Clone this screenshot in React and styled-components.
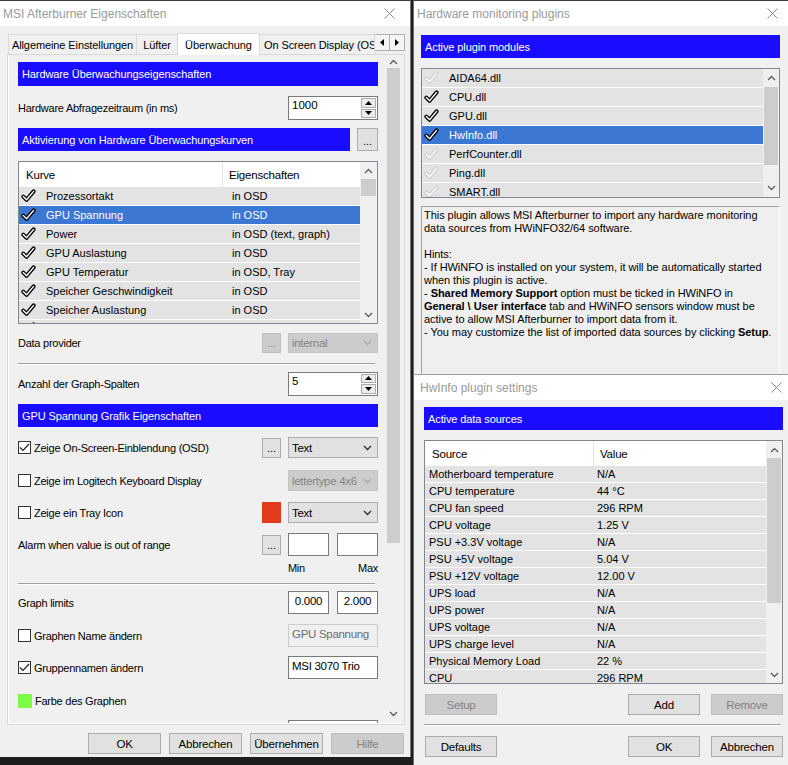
import React from 'react';
import styled, { createGlobalStyle } from 'styled-components';

const GlobalStyle = createGlobalStyle`
  html, body { margin: 0; padding: 0; background: #1d1d1d; }
  body { font-family: "Liberation Sans", Arial, sans-serif; font-size: 11px; color: #000; }
  * { box-sizing: border-box; }
`;

const Desktop = styled.div`
  width: 788px;
  height: 765px;
  display: flex;
  gap: 2px;
  overflow: hidden;
  background: #1d1d1d;
`;

const Window = styled.div`
  width: ${p => p.$w}px;
  height: ${p => p.$h}px;
  flex: none;
  background: #f0f0f0;
  display: flex;
  flex-direction: column;
  overflow: hidden;
  border-top: 1px solid ${p => p.$edge || '#3c3c3c'};
  border-left: ${p => (p.$left ? '1px solid #6e6e6e' : 'none')};
  border-right: ${p => (p.$right ? '1px solid #7a7a7a' : 'none')};
`;

const RightColumn = styled.div`
  width: 375px;
  flex: none;
  display: flex;
  flex-direction: column;
`;

const TitleBar = styled.div`
  height: 25px;
  flex: none;
  background: #fff;
  display: flex;
  align-items: center;
  justify-content: space-between;
  padding: 0 ${p => p.$r}px 0 ${p => p.$l}px;
  font-size: 12px;
  color: #9a9a9a;
  white-space: nowrap;
`;

const CloseX = () => (
  <svg width="11" height="11" viewBox="0 0 11 11">
    <path d="M0.5 0.5 L10.5 10.5 M10.5 0.5 L0.5 10.5" stroke="#8c8c8c" strokeWidth="1" />
  </svg>
);

const Chevron = ({ up, color = '#606060' }) => (
  <svg width="9" height="6" viewBox="0 0 9 6">
    <path d={up ? 'M1 5 L4.5 1.5 L8 5' : 'M1 1 L4.5 4.5 L8 1'} fill="none" stroke={color} strokeWidth="1.4" />
  </svg>
);

const Tri = ({ dir }) => {
  const d = {
    up: 'M0 4 L3.5 0 L7 4 Z',
    down: 'M0 0 L3.5 4 L7 0 Z',
    left: 'M4 0 L0 3.5 L4 7 Z',
    right: 'M0 0 L4 3.5 L0 7 Z',
  }[dir];
  const horiz = dir === 'left' || dir === 'right';
  return (
    <svg width={horiz ? 4 : 7} height={horiz ? 7 : 4} viewBox={horiz ? '0 0 4 7' : '0 0 7 4'}>
      <path d={d} fill="#000" />
    </svg>
  );
};

const ListCheck = ({ on }) => (
  <svg width="15" height="14" viewBox="0 0 15 14">
    <path d="M2.3 7.6 L5.6 10.8 L12.6 2.4" fill="none" stroke={on ? '#000' : '#d0d0d0'} strokeWidth="4" strokeLinecap="round" strokeLinejoin="round" />
    <path d="M2.3 7.6 L5.6 10.8 L12.6 2.4" fill="none" stroke="#fff" strokeWidth="1.4" strokeLinecap="round" strokeLinejoin="round" />
  </svg>
);

/* ---------- tabs ---------- */

const TabStrip = styled.div`
  height: 28px;
  flex: none;
  display: flex;
  align-items: flex-end;
  padding-left: 8px;
`;

const Tab = styled.div`
  width: ${p => p.$w}px;
  height: ${p => (p.$active ? 22 : 20)}px;
  flex: none;
  display: flex;
  align-items: center;
  justify-content: ${p => (p.$clip ? 'flex-start' : 'center')};
  padding-left: ${p => (p.$clip ? 4 : 0)}px;
  overflow: hidden;
  white-space: nowrap;
  font-size: 11px;
  letter-spacing: -0.1px;
  background: ${p => (p.$active ? '#fff' : '#f0f0f0')};
  border: 1px solid #d9d9d9;
  border-bottom: none;
  margin-right: -1px;
  margin-bottom: ${p => (p.$active ? -1 : 0)}px;
  position: relative;
  z-index: ${p => (p.$active ? 2 : 1)};
`;

const TabScroller = styled.div`
  display: flex;
  margin: 0 0 3px 1px;
`;

const TabArrow = styled.div`
  width: 16px;
  height: 17px;
  border: 1px solid #adadad;
  background: #f5f5f5;
  display: flex;
  align-items: center;
  justify-content: center;
  margin-left: -1px;
`;

const TabPanel = styled.div`
  width: 398px;
  height: 671px;
  flex: none;
  margin-left: 7px;
  border: 1px solid #d9d9d9;
  background: #fff;
  padding: 0 0 1px 1px;
  display: flex;
`;

const PanelInner = styled.div`
  flex: 1;
  background: #f0f0f0;
  display: flex;
  overflow: hidden;
`;

const ScrollContent = styled.div`
  width: 377px;
  flex: none;
  padding: 7px 8px 0 9px;
  display: flex;
  flex-direction: column;
  overflow: hidden;
`;

/* ---------- scrollbars ---------- */

const ScrollTrack = styled.div`
  width: ${p => p.$w}px;
  flex: none;
  display: flex;
  flex-direction: column;
  background: #f0f0f0;
  margin: ${p => p.$m || '0'};
`;

const ScrollArrow = styled.div`
  height: ${p => p.$h}px;
  flex: none;
  display: flex;
  align-items: center;
  justify-content: center;
`;

const Thumb = styled.div`
  height: ${p => p.$h}px;
  flex: none;
  margin: ${p => p.$top}px 1px 0;
  background: #cdcdcd;
`;

const Fill = styled.div`
  flex: 1;
`;

const ScrollBar = ({ w, arrow, top = 0, thumb, m }) => (
  <ScrollTrack $w={w} $m={m}>
    <ScrollArrow $h={arrow}><Chevron up /></ScrollArrow>
    <Thumb $top={top} $h={thumb} />
    <Fill />
    <ScrollArrow $h={arrow}><Chevron /></ScrollArrow>
  </ScrollTrack>
);

/* ---------- form parts ---------- */

const Header = styled.div`
  height: ${p => p.$h || 23}px;
  flex: ${p => (p.$grow ? 1 : 'none')};
  width: ${p => (p.$w ? `${p.$w}px` : 'auto')};
  background: #1a0dff;
  color: #fff;
  font-size: 11px;
  letter-spacing: -0.1px;
  display: flex;
  align-items: center;
  padding-left: 4px;
  white-space: nowrap;
  margin-top: ${p => p.$mt || 0}px;
`;

const Row = styled.div`
  height: ${p => p.$h || 22}px;
  flex: none;
  display: flex;
  align-items: center;
  gap: ${p => p.$gap ?? 7}px;
  margin-top: ${p => p.$mt || 0}px;
`;

const Label = styled.span`
  flex: 1;
  font-size: 11px;
  letter-spacing: -0.25px;
  white-space: nowrap;
  display: flex;
  align-items: center;
`;

const Box = styled.span`
  width: 13px;
  height: 13px;
  flex: none;
  border: 1px solid #333;
  background: #fff;
  margin-right: 3px;
  display: flex;
  align-items: center;
  justify-content: center;
`;

const Swatch = styled.span`
  width: ${p => p.$w}px;
  height: ${p => p.$h}px;
  flex: none;
  background: ${p => p.$c};
  margin-right: ${p => p.$mr || 0}px;
`;

const CheckBox = ({ on }) => (
  <Box>
    {on && (
      <svg width="11" height="9" viewBox="0 0 11 9">
        <path d="M1 4.5 L4 7.5 L10 1" fill="none" stroke="#222" strokeWidth="1.2" />
      </svg>
    )}
  </Box>
);

const Dots = styled.div`
  width: ${p => p.$w || 19}px;
  height: ${p => p.$h || 20}px;
  flex: none;
  border: 1px solid ${p => (p.$dis ? '#bfbfbf' : '#adadad')};
  background: ${p => (p.$dis ? '#cccccc' : '#e1e1e1')};
  color: ${p => (p.$dis ? '#8a8a8a' : '#000')};
  font-size: 11px;
  display: flex;
  align-items: flex-end;
  justify-content: center;
  padding-bottom: 3px;
  line-height: 1;
`;

const Select = styled.div`
  width: 90px;
  height: ${p => p.$h || 21}px;
  flex: none;
  border: 1px solid ${p => (p.$dis ? '#c4c4c4' : '#adadad')};
  background: ${p => (p.$dis ? '#cccccc' : '#e1e1e1')};
  color: ${p => (p.$dis ? '#838383' : '#000')};
  font-size: 11.5px;
  letter-spacing: -0.3px;
  display: flex;
  align-items: center;
  justify-content: space-between;
  padding: 0 5px 0 3px;
  white-space: nowrap;
`;

const Edit = styled.div`
  width: ${p => p.$w}px;
  height: 23px;
  flex: none;
  border: 1px solid ${p => (p.$dis ? '#cccccc' : '#7a7a7a')};
  background: ${p => (p.$dis ? '#f0f0f0' : '#fff')};
  color: ${p => (p.$dis ? '#6d6d6d' : '#000')};
  font-size: 11.5px;
  letter-spacing: -0.3px;
  padding: 3px 3px 0;
  text-align: ${p => (p.$center ? 'center' : 'left')};
  white-space: nowrap;
`;

const Spin = styled.div`
  width: 90px;
  height: 24px;
  flex: none;
  display: flex;
  border: 1px solid #7a7a7a;
  background: #fff;
`;

const SpinText = styled.div`
  flex: 1;
  font-size: 11.5px;
  padding: 2px 3px 0;
`;

const SpinButtons = styled.div`
  width: 17px;
  display: flex;
  flex-direction: column;
  gap: 1px;
  padding: 1px;
`;

const SpinButton = styled.div`
  flex: 1;
  border: 1px solid #adadad;
  background: #ececec;
  display: flex;
  align-items: center;
  justify-content: center;
`;

const SpinBox = ({ value }) => (
  <Spin>
    <SpinText>{value}</SpinText>
    <SpinButtons>
      <SpinButton><Tri dir="up" /></SpinButton>
      <SpinButton><Tri dir="down" /></SpinButton>
    </SpinButtons>
  </Spin>
);

const Separator = styled.div`
  height: 2px;
  flex: none;
  width: ${p => p.$w}px;
  border-top: 1px solid #a0a0a0;
  border-bottom: 1px solid #fff;
  margin-top: ${p => p.$mt || 0}px;
`;

const MinMax = styled.div`
  width: 90px;
  display: flex;
  justify-content: space-between;
  font-size: 11px;
  letter-spacing: -0.3px;
`;

const Button = styled.div`
  width: ${p => p.$w || 73}px;
  height: 21px;
  flex: none;
  border: 1px solid ${p => (p.$dis ? '#bfbfbf' : '#adadad')};
  background: ${p => (p.$dis ? '#cccccc' : '#e1e1e1')};
  color: ${p => (p.$dis ? '#838383' : '#000')};
  font-size: 11.5px;
  letter-spacing: -0.2px;
  display: flex;
  align-items: center;
  justify-content: center;
`;

const ButtonBar = styled.div`
  display: flex;
  gap: ${p => p.$gap || 8}px;
  justify-content: ${p => p.$justify || 'flex-end'};
  padding: 0 ${p => p.$pr || 0}px 0 ${p => p.$pl || 0}px;
  margin-top: ${p => p.$mt || 0}px;
  flex: none;
`;

const Spacer = styled.div`
  flex: 1;
`;

/* ---------- list views ---------- */

const ListBox = styled.div`
  width: ${p => (p.$w ? `${p.$w}px` : 'auto')};
  height: ${p => p.$h}px;
  flex: none;
  border: 1px solid #828790;
  background: #fff;
  display: flex;
  margin-top: ${p => p.$mt || 0}px;
  overflow: hidden;
`;

const ListMain = styled.div`
  flex: 1;
  display: flex;
  flex-direction: column;
  overflow: hidden;
`;

const ListHead = styled.div`
  height: 25px;
  flex: none;
  display: flex;
  background: #fff;
  font-size: 11.5px;
  letter-spacing: -0.2px;
`;

const HeadCell = styled.div`
  width: ${p => (p.$w ? `${p.$w}px` : 'auto')};
  flex: ${p => (p.$w ? 'none' : 1)};
  padding-left: ${p => p.$pl}px;
  display: flex;
  align-items: center;
  border-right: ${p => (p.$w ? '1px solid #e5e5e5' : 'none')};
`;

const ListRow = styled.div`
  height: ${p => p.$h}px;
  flex: none;
  display: flex;
  align-items: center;
  background: ${p => (p.$sel ? '#3b77d3' : '#e3e3e3')};
  color: ${p => (p.$sel ? '#fff' : '#000')};
  border-bottom: 1px solid #fff;
  font-size: 11px;
  white-space: nowrap;
`;

const Cell = styled.div`
  width: ${p => (p.$w ? `${p.$w}px` : 'auto')};
  flex: ${p => (p.$w ? 'none' : 1)};
  padding-left: ${p => p.$pl}px;
  display: flex;
  align-items: center;
  gap: ${p => p.$gap || 0}px;
  overflow: hidden;
`;

const DescBox = styled.div`
  width: 359px;
  flex: 1;
  margin-top: 8px;
  border: 1px solid #a0a0a0;
  border-right-color: #fff;
  border-bottom: none;
  background: #efefef;
  padding: 2px 2px;
  font-size: 11px;
  letter-spacing: -0.05px;
  line-height: 13px;
  white-space: nowrap;
  overflow: hidden;
`;

const WinBody = styled.div`
  flex: 1;
  display: flex;
  flex-direction: column;
  padding-left: ${p => p.$pl}px;
  overflow: hidden;
`;

/* ---------- data ---------- */

const curves = [
  ['Prozessortakt', 'in OSD'],
  ['GPU Spannung', 'in OSD', true],
  ['Power', 'in OSD (text, graph)'],
  ['GPU Auslastung', 'in OSD'],
  ['GPU Temperatur', 'in OSD, Tray'],
  ['Speicher Geschwindigkeit', 'in OSD'],
  ['Speicher Auslastung', 'in OSD'],
  ['', ''],
];

const plugins = [
  ['AIDA64.dll', false],
  ['CPU.dll', true],
  ['GPU.dll', true],
  ['HwInfo.dll', true, true],
  ['PerfCounter.dll', false],
  ['Ping.dll', false],
  ['SMART.dll', false],
];

const sources = [
  ['Motherboard temperature', 'N/A'],
  ['CPU temperature', '44 °C'],
  ['CPU fan speed', '296 RPM'],
  ['CPU voltage', '1.25 V'],
  ['PSU +3.3V voltage', 'N/A'],
  ['PSU +5V voltage', '5.04 V'],
  ['PSU +12V voltage', '12.00 V'],
  ['UPS load', 'N/A'],
  ['UPS power', 'N/A'],
  ['UPS voltage', 'N/A'],
  ['UPS charge level', 'N/A'],
  ['Physical Memory Load', '22 %'],
  ['CPU', '296 RPM'],
];

/* ---------- windows ---------- */

const PropertiesWindow = () => (
  <Window $w={411} $h={757} $right>
    <TitleBar $l={3} $r={15}>
      <span>MSI Afterburner Eigenschaften</span>
      <CloseX />
    </TitleBar>
    <TabStrip>
      <Tab $w={129}>Allgemeine Einstellungen</Tab>
      <Tab $w={42}>Lüfter</Tab>
      <Tab $w={83} $active>Überwachung</Tab>
      <Tab $w={116} $clip>On Screen Display (OS</Tab>
      <TabScroller>
        <TabArrow><Tri dir="left" /></TabArrow>
        <TabArrow><Tri dir="right" /></TabArrow>
      </TabScroller>
    </TabStrip>
    <TabPanel>
      <PanelInner>
        <ScrollContent>
          <Header $h={24}>Hardware Überwachungseigenschaften</Header>
          <Row $h={24} $mt={10}>
            <Label>Hardware Abfragezeitraum (in ms)</Label>
            <SpinBox value="1000" />
          </Row>
          <Row $h={23} $mt={8}>
            <Header $grow>Aktivierung von Hardware Überwachungskurven</Header>
            <Dots $w={21} $h={23}>...</Dots>
          </Row>
          <ListBox $h={163} $mt={10}>
            <ListMain>
              <ListHead>
                <HeadCell $w={204} $pl={7}>Kurve</HeadCell>
                <HeadCell $pl={6}>Eigenschaften</HeadCell>
              </ListHead>
              {curves.map(([name, prop, sel], i) => (
                <ListRow key={i} $h={19} $sel={sel}>
                  <Cell $w={204} $pl={2} $gap={10}>
                    <ListCheck on />
                    <span>{name}</span>
                  </Cell>
                  <Cell $pl={9}>{prop}</Cell>
                </ListRow>
              ))}
            </ListMain>
            <ScrollBar w={17} arrow={17} thumb={17} />
          </ListBox>
          <Row $h={20} $mt={9}>
            <Label>Data provider</Label>
            <Dots $dis>...</Dots>
            <Select $dis $h={20}>internal<Chevron color="#a8a8a8" /></Select>
          </Row>
          <Separator $w={357} $mt={10} />
          <Row $h={23} $mt={7}>
            <Label>Anzahl der Graph-Spalten</Label>
            <SpinBox value="5" />
          </Row>
          <Header $mt={9}>GPU Spannung Grafik Eigenschaften</Header>
          <Row $h={21} $mt={10}>
            <Label><CheckBox on />Zeige On-Screen-Einblendung (OSD)</Label>
            <Dots>...</Dots>
            <Select>Text<Chevron color="#333" /></Select>
          </Row>
          <Row $h={21} $mt={12}>
            <Label><CheckBox />Zeige im Logitech Keyboard Display</Label>
            <Select $dis>lettertype 4x6<Chevron color="#a8a8a8" /></Select>
          </Row>
          <Row $h={21} $mt={11}>
            <Label><CheckBox />Zeige ein Tray Icon</Label>
            <Swatch $w={19} $h={21} $c="#e23b1d" />
            <Select>Text<Chevron color="#333" /></Select>
          </Row>
          <Row $h={23} $mt={10}>
            <Label>Alarm when value is out of range</Label>
            <Dots>...</Dots>
            <Row $gap={8}>
              <Edit $w={41} />
              <Edit $w={41} />
            </Row>
          </Row>
          <Row $h={14} $mt={5} $gap={0}>
            <Label />
            <MinMax><span>Min</span><span>Max</span></MinMax>
          </Row>
          <Separator $w={357} $mt={8} />
          <Row $h={23} $mt={6}>
            <Label>Graph limits</Label>
            <Row $gap={8}>
              <Edit $w={41} $center>0.000</Edit>
              <Edit $w={41} $center>2.000</Edit>
            </Row>
          </Row>
          <Row $h={23} $mt={10}>
            <Label><CheckBox />Graphen Name ändern</Label>
            <Edit $w={90} $dis>GPU Spannung</Edit>
          </Row>
          <Row $h={23} $mt={9}>
            <Label><CheckBox on />Gruppennamen ändern</Label>
            <Edit $w={90}>MSI 3070 Trio</Edit>
          </Row>
          <Row $h={22} $mt={11}>
            <Label><Swatch $w={14} $h={14} $c="#7ffb45" $mr={3} />Farbe des Graphen</Label>
          </Row>
          <Row $h={23} $mt={8}>
            <Label />
            <Edit $w={90} />
          </Row>
        </ScrollContent>
        <ScrollBar w={15} arrow={12} thumb={475} m="1px 0 3px 0" />
      </PanelInner>
    </TabPanel>
    <ButtonBar $mt={8} $pr={6}>
      <Button>OK</Button>
      <Button>Abbrechen</Button>
      <Button>Übernehmen</Button>
      <Button $dis>Hilfe</Button>
    </ButtonBar>
  </Window>
);

const PluginsWindow = () => (
  <Window $w={375} $h={374} $left>
    <TitleBar $l={3} $r={10}>
      <span>Hardware monitoring plugins</span>
      <CloseX />
    </TitleBar>
    <WinBody $pl={7}>
      <Header $w={359} $mt={9}>Active plugin modules</Header>
      <ListBox $w={359} $h={130} $mt={10}>
        <ListMain>
          {plugins.map(([name, on, sel]) => (
            <ListRow key={name} $h={19} $sel={sel}>
              <Cell $pl={2} $gap={10}>
                <ListCheck on={on} />
                <span>{name}</span>
              </Cell>
            </ListRow>
          ))}
        </ListMain>
        <ScrollBar w={16} arrow={18} thumb={78} />
      </ListBox>
      <DescBox>
        This plugin allows MSI Afterburner to import any hardware monitoring<br />
        data sources from HWiNFO32/64 software.<br />
        <br />
        Hints:<br />
        - If HWiNFO is installed on your system, it will be automatically started<br />
        when this plugin is active.<br />
        - <b>Shared Memory Support</b> option must be ticked in HWiNFO in<br />
        <b>General \ User interface</b> tab and HWiNFO sensors window must be<br />
        active to allow MSI Afterburner to import data from it.<br />
        - You may customize the list of imported data sources by clicking <b>Setup</b>.
      </DescBox>
    </WinBody>
  </Window>
);

const HwInfoWindow = () => (
  <Window $w={375} $h={391} $left $edge="#9c9c9c">
    <TitleBar $l={6} $r={6}>
      <span>HwInfo plugin settings</span>
      <CloseX />
    </TitleBar>
    <WinBody $pl={10}>
      <Header $w={359} $mt={7}>Active data sources</Header>
      <ListBox $w={359} $h={244} $mt={10}>
        <ListMain>
          <ListHead>
            <HeadCell $w={169} $pl={7}>Source</HeadCell>
            <HeadCell $pl={6}>Value</HeadCell>
          </ListHead>
          {sources.map(([name, value]) => (
            <ListRow key={name} $h={17}>
              <Cell $w={169} $pl={4}>{name}</Cell>
              <Cell $pl={3}>{value}</Cell>
            </ListRow>
          ))}
        </ListMain>
        <ScrollBar w={16} arrow={17} thumb={145} />
      </ListBox>
      <ButtonBar $mt={10} $justify="flex-start" $gap={11} $pl={1} $pr={5}>
        <Button $w={72} $dis>Setup</Button>
        <Spacer />
        <Button $w={72}>Add</Button>
        <Button $w={72} $dis>Remove</Button>
      </ButtonBar>
      <Separator $w={357} $mt={9} />
      <ButtonBar $mt={10} $justify="flex-start" $gap={11} $pl={1} $pr={5}>
        <Button $w={72}>Defaults</Button>
        <Spacer />
        <Button $w={72}>OK</Button>
        <Button $w={72}>Abbrechen</Button>
      </ButtonBar>
    </WinBody>
  </Window>
);

const App = () => (
  <>
    <GlobalStyle />
    <Desktop>
      <PropertiesWindow />
      <RightColumn>
        <PluginsWindow />
        <HwInfoWindow />
      </RightColumn>
    </Desktop>
  </>
);

export default App;
